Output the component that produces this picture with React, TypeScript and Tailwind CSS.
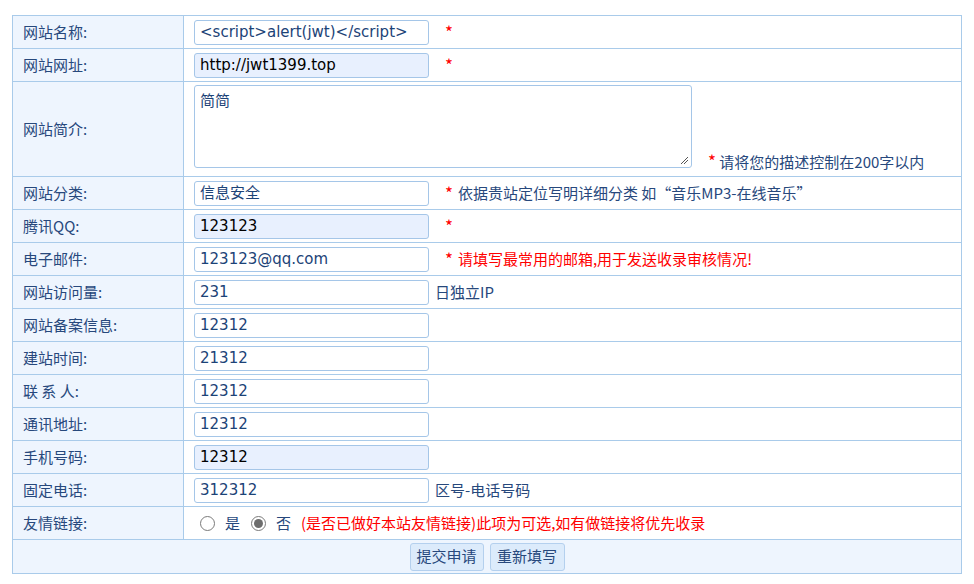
import React from "react";

const cjk = { fontFamily: '"Noto Sans CJK SC", "Noto Sans", sans-serif' };
const mono = { fontFamily: '"DejaVu Sans", "Noto Sans CJK SC", sans-serif' };

const Row = ({
	label,
	tall,
	children,
}: {
	label: string;
	tall?: boolean;
	children: React.ReactNode;
}) => (
	<>
		<div
			className={`${tall ? "h-[95px]" : "h-[33px]"} flex items-center pl-[10px] bg-[#eef5fe] border-r border-b border-[#a9cbea] text-[15px] text-[#27487c]`}
		>
			{label}
		</div>
		<div
			className={`${tall ? "h-[95px]" : "h-[33px]"} flex items-center pl-[10px] bg-white border-r border-b border-[#a9cbea] text-[15px] text-[#27487c]`}
		>
			{children}
		</div>
	</>
);

const Field = ({ value, filled }: { value: string; filled?: boolean }) => (
	<div
		className={`w-[235px] h-[25px] flex items-center pt-[1px] px-[5px] border border-[#a5c6e8] rounded-[3px] text-[15px] whitespace-nowrap overflow-hidden ${filled ? "bg-[#e8f0fe] text-black" : "bg-white text-[#1c4377]"}`}
		style={mono}
	>
		{value}
	</div>
);

const Star = () => <span className="ml-[16px] text-[17px] text-[#ff0000]">*</span>;

const Radio = ({ checked }: { checked?: boolean }) => (
	<span className="w-[15px] h-[15px] rounded-full border border-[#7a7a7a] bg-white flex items-center justify-center">
		{checked && <span className="w-[9px] h-[9px] rounded-full bg-[#6d6d6d]" />}
	</span>
);

export default function App() {
	return (
		<div className="w-[974px] h-[584px] bg-white pt-[15px] pl-[12px]" style={cjk}>
			<div className="w-[950px] grid grid-cols-[171px_778px] border-l border-t border-[#a9cbea]">
				<Row label="网站名称:">
					<Field value="<script>alert(jwt)</script>" />
					<Star />
				</Row>
				<Row label="网站网址:">
					<Field value="http://jwt1399.top" filled />
					<Star />
				</Row>
				<Row label="网站简介:" tall>
					<div className="self-start mt-[3px] w-[498px] h-[83px] border border-[#a5c6e8] rounded-[3px] bg-white px-[5px] py-[3px] text-[15px] text-[#1c4377] relative">
						简简
						<svg
							className="absolute right-[2px] bottom-[2px]"
							width="9"
							height="9"
							viewBox="0 0 9 9"
						>
							<path d="M8 1 L1 8 M8 4 L4 8" stroke="#555" strokeWidth="1" />
						</svg>
					</div>
					<div className="self-end mb-[3px] ml-[16px]">
						<span className="text-[17px] text-[#ff0000]">*</span> 请将您的描述控制在200字以内
					</div>
				</Row>
				<Row label="网站分类:">
					<Field value="信息安全" />
					<Star />
					<span className="ml-[5px]">依据贵站定位写明详细分类 如“音乐MP3-在线音乐”</span>
				</Row>
				<Row label="腾讯QQ:">
					<Field value="123123" filled />
					<Star />
				</Row>
				<Row label="电子邮件:">
					<Field value="123123@qq.com" />
					<Star />
					<span className="ml-[5px] text-[#ff0000]">请填写最常用的邮箱,用于发送收录审核情况!</span>
				</Row>
				<Row label="网站访问量:">
					<Field value="231" />
					<span className="ml-[6px]">日独立IP</span>
				</Row>
				<Row label="网站备案信息:">
					<Field value="12312" />
				</Row>
				<Row label="建站时间:">
					<Field value="21312" />
				</Row>
				<Row label="联 系 人:">
					<Field value="12312" />
				</Row>
				<Row label="通讯地址:">
					<Field value="12312" />
				</Row>
				<Row label="手机号码:">
					<Field value="12312" filled />
				</Row>
				<Row label="固定电话:">
					<Field value="312312" />
					<span className="ml-[6px]">区号-电话号码</span>
				</Row>
				<Row label="友情链接:">
					<span className="ml-[6px]">
						<Radio />
					</span>
					<span className="ml-[10px]">是</span>
					<span className="ml-[11px]">
						<Radio checked />
					</span>
					<span className="ml-[10px]">否</span>
					<span className="ml-[10px] text-[#ff0000]">
						(是否已做好本站友情链接)此项为可选,如有做链接将优先收录
					</span>
				</Row>
				<div className="col-span-2 h-[34px] flex items-center justify-center gap-[6px] bg-[#eef5fe] border-r border-b border-[#a9cbea]">
					<button className="w-[74px] h-[28px] bg-[#dcebfb] border border-[#b4d0ee] rounded-[3px] text-[15px] text-[#27487c]">
						提交申请
					</button>
					<button className="w-[75px] h-[28px] bg-[#dcebfb] border border-[#b4d0ee] rounded-[3px] text-[15px] text-[#27487c]">
						重新填写
					</button>
				</div>
			</div>
		</div>
	);
}
